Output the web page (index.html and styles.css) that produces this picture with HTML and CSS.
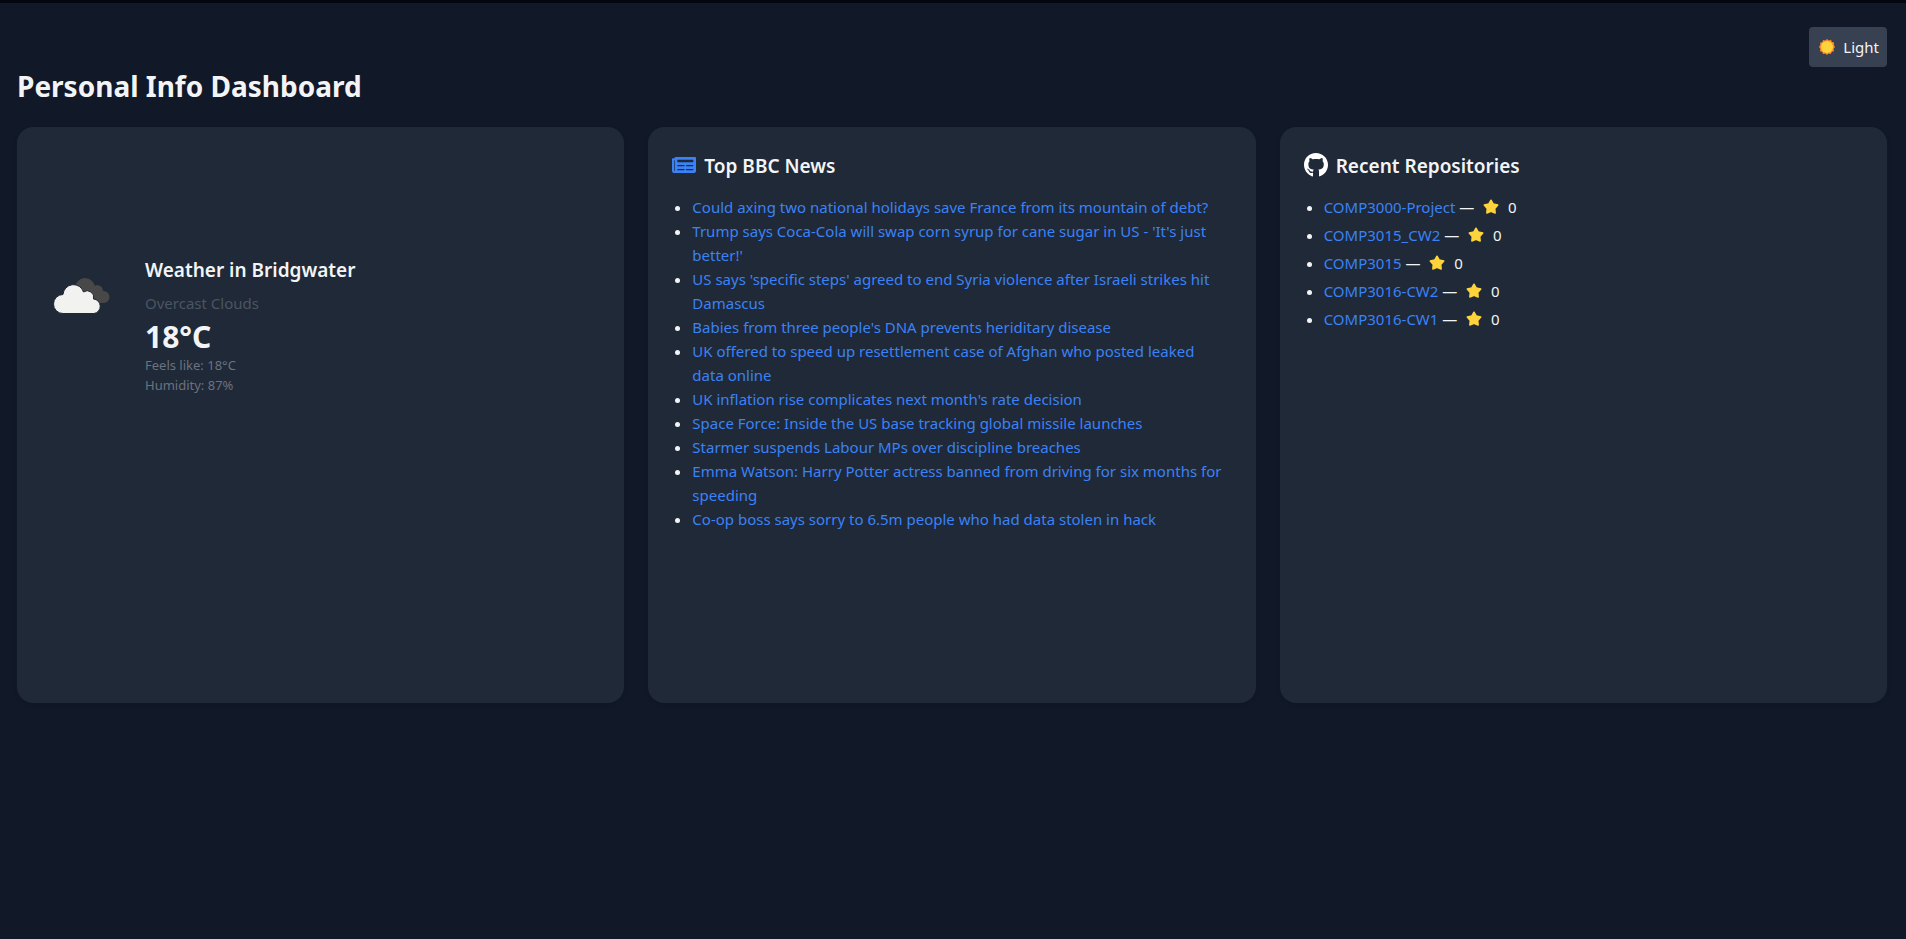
FILE: index.html
```html
<!DOCTYPE html>
<html lang="en">
<head>
<meta charset="utf-8">
<title>Personal Info Dashboard</title>
<link rel="stylesheet" href="styles.css">
</head>
<body>
<svg class="sprite" aria-hidden="true">
  <symbol id="star" viewBox="0 0 32 32">
    <path fill="#ffd43b" stroke="#ffd43b" stroke-width="3" stroke-linejoin="round" d="M16 2.500L20.600 10.200L29.500 12.200L23.500 19L24.300 28L16 24.500L7.700 28L8.500 19L2.500 12.200L11.400 10.200Z"/>
  </symbol>
</svg>
<main class="page">
  <div class="toolbar">
    <button class="theme-button" type="button">
      <svg class="sun" viewBox="0 0 32 32" aria-hidden="true">
        <path fill="#ff8a2b" d="M16 0l3.600 3 4.400-1.400 1.800 4.300 4.500 1.200-.7 4.600L32 16l-2.900 3.700 1 4.600-4.500 1.400-1.900 4.300-4.400-1.200L16 32l-3.500-3.100L8.100 30l-1.900-4.300-4.400-1.400.9-4.600L0 16l2.700-3.800L2 7.600l4.500-1.300 1.700-4.500L12.600 3z"/>
        <circle cx="16" cy="16" r="12" fill="#ffd43b"/>
      </svg>
      <span>Light</span>
    </button>
  </div>
  <h1 class="page-title">Personal Info Dashboard</h1>
  <div class="cards">
    <section class="card">
      <div class="weather">
        <svg class="weather-icon" viewBox="0 0 80 80" role="img" aria-label="Overcast clouds">
          <g fill="#484848">
            <circle cx="44" cy="32" r="10"/>
            <circle cx="56" cy="35" r="6"/>
            <circle cx="62.500" cy="41" r="6"/>
            <path d="M40 32h16l6 15H44z"/>
          </g>
          <g fill="#f2f2f0">
            <path stroke="#1f2937" stroke-width="1" d="M22 57.500a9.500 9.500 0 0 1 0-19a10.500 10.500 0 0 1 20.500-2.500a6.500 6.500 0 0 1 10 7a7.300 7.300 0 0 1 .5 14.500z"/>
          </g>
        </svg>
        <div>
          <h2 class="weather-title">Weather in Bridgwater</h2>
          <p class="weather-desc">Overcast Clouds</p>
          <p class="weather-temp">18°C</p>
          <p class="weather-detail">Feels like: 18°C</p>
          <p class="weather-detail">Humidity: 87%</p>
        </div>
      </div>
    </section>
    <section class="card">
      <h2 class="card-title">
        <svg class="card-icon news-icon" viewBox="0 0 576 512" aria-hidden="true"><path fill="currentColor" d="M552 64H88c-13.255 0-24 10.745-24 24v8H24c-13.255 0-24 10.745-24 24v272c0 30.928 25.072 56 56 56h472c26.510 0 48-21.490 48-48V88c0-13.255-10.745-24-24-24zM56 400a8 8 0 0 1-8-8V144h16v248a8 8 0 0 1-8 8zm236-16H140c-6.627 0-12-5.373-12-12v-8c0-6.627 5.373-12 12-12h152c6.627 0 12 5.373 12 12v8c0 6.627-5.373 12-12 12zm208 0H348c-6.627 0-12-5.373-12-12v-8c0-6.627 5.373-12 12-12h152c6.627 0 12 5.373 12 12v8c0 6.627-5.373 12-12 12zm-208-96H140c-6.627 0-12-5.373-12-12v-8c0-6.627 5.373-12 12-12h152c6.627 0 12 5.373 12 12v8c0 6.627-5.373 12-12 12zm208 0H348c-6.627 0-12-5.373-12-12v-8c0-6.627 5.373-12 12-12h152c6.627 0 12 5.373 12 12v8c0 6.627-5.373 12-12 12zm0-96H140c-6.627 0-12-5.373-12-12v-40c0-6.627 5.373-12 12-12h360c6.627 0 12 5.373 12 12v40c0 6.627-5.373 12-12 12z"/></svg>
        Top BBC News
      </h2>
      <ul class="list">
        <li><a href="#">Could axing two national holidays save France from its mountain of debt?</a></li>
        <li><a href="#">Trump says Coca-Cola will swap corn syrup for cane sugar in US - 'It's just better!'</a></li>
        <li><a href="#">US says 'specific steps' agreed to end Syria violence after Israeli strikes hit Damascus</a></li>
        <li><a href="#">Babies from three people's DNA prevents heriditary disease</a></li>
        <li><a href="#">UK offered to speed up resettlement case of Afghan who posted leaked data online</a></li>
        <li><a href="#">UK inflation rise complicates next month's rate decision</a></li>
        <li><a href="#">Space Force: Inside the US base tracking global missile launches</a></li>
        <li><a href="#">Starmer suspends Labour MPs over discipline breaches</a></li>
        <li><a href="#">Emma Watson: Harry Potter actress banned from driving for six months for speeding</a></li>
        <li><a href="#">Co-op boss says sorry to 6.5m people who had data stolen in hack</a></li>
      </ul>
    </section>
    <section class="card">
      <h2 class="card-title">
        <svg class="card-icon github-icon" viewBox="0 0 496 512" aria-hidden="true"><path fill="currentColor" d="M165.900 397.400c0 2-2.300 3.600-5.200 3.600-3.300.3-5.600-1.300-5.600-3.600 0-2 2.300-3.600 5.200-3.600 3-.3 5.600 1.300 5.600 3.600zm-31.100-4.500c-.7 2 1.300 4.300 4.300 4.900 2.600 1 5.600 0 6.200-2s-1.300-4.300-4.300-5.200c-2.600-.7-5.500.3-6.200 2.300zm44.200-1.700c-2.900.7-4.900 2.600-4.600 4.900.3 2 2.900 3.300 5.900 2.600 2.900-.7 4.900-2.600 4.600-4.600-.3-1.900-3-3.200-5.900-2.900zM244.800 8C106.100 8 0 113.300 0 252c0 110.900 69.800 205.800 169.500 239.200 12.800 2.300 17.300-5.600 17.300-12.100 0-6.200-.3-40.400-.3-61.400 0 0-70 15-84.700-29.800 0 0-11.400-29.100-27.800-36.600 0 0-22.900-15.700 1.600-15.400 0 0 24.900 2 38.600 25.800 21.900 38.600 58.600 27.500 72.900 20.900 2.300-16 8.800-27.100 16-33.700-55.900-6.200-112.300-14.300-112.300-110.500 0-27.500 7.600-41.300 23.600-58.900-2.600-6.500-11.100-33.300 2.600-67.900 20.900-6.500 69 27 69 27 20-5.600 41.500-8.500 62.800-8.500s42.800 2.900 62.800 8.500c0 0 48.100-33.600 69-27 13.700 34.700 5.200 61.400 2.600 67.900 16 17.700 25.800 31.500 25.800 58.900 0 96.500-58.900 104.200-114.800 110.500 9.200 7.900 17 22.900 17 46.400 0 33.700-.3 75.400-.3 83.600 0 6.500 4.600 14.400 17.300 12.100C428.200 457.800 496 362.900 496 252 496 113.300 383.500 8 244.800 8zM97.200 352.900c-1.300 1-1 3.300.7 5.200 1.600 1.600 3.900 2.300 5.200 1 1.300-1 1-3.300-.7-5.200-1.600-1.600-3.900-2.300-5.200-1zm-10.800-8.100c-.7 1.300.3 2.900 2.300 3.900 1.600 1 3.600.7 4.300-.7.7-1.300-.3-2.900-2.300-3.900-2-.6-3.600-.3-4.300.7zm32.400 35.600c-1.600 1.300-1 4.300 1.300 6.200 2.300 2.300 5.200 2.600 6.500 1 1.300-1.300.7-4.300-1.300-6.200-2.200-2.300-5.200-2.600-6.500-1zm-11.400-14.700c-1.600 1-1.600 3.600 0 5.900 1.600 2.300 4.300 3.300 5.600 2.300 1.600-1.300 1.600-3.900 0-6.200-1.400-2.300-4-3.300-5.600-2z"/></svg>
        Recent Repositories
      </h2>
      <ul class="list repos">
        <li><a href="#">COMP3000-Project</a> — <svg class="star" role="img" aria-label="Stars"><use href="#star"/></svg> 0</li>
        <li><a href="#">COMP3015_CW2</a> — <svg class="star" role="img" aria-label="Stars"><use href="#star"/></svg> 0</li>
        <li><a href="#">COMP3015</a> — <svg class="star" role="img" aria-label="Stars"><use href="#star"/></svg> 0</li>
        <li><a href="#">COMP3016-CW2</a> — <svg class="star" role="img" aria-label="Stars"><use href="#star"/></svg> 0</li>
        <li><a href="#">COMP3016-CW1</a> — <svg class="star" role="img" aria-label="Stars"><use href="#star"/></svg> 0</li>
      </ul>
    </section>
  </div>
</main>
</body>
</html>
```
FILE: styles.css
```css
* {
  box-sizing: border-box;
  margin: 0;
  padding: 0;
}

body {
  min-height: 100vh;
  border-top: 3px solid #030712;
  background: #111827;
  color: #f3f4f6;
  font-family: "Segoe UI", "Noto Sans", "Open Sans", sans-serif;
  font-size: 15px;
  line-height: 24px;
}

.sprite {
  display: none;
}

.page {
  padding: 24px 19px 24px 17px;
}

.toolbar {
  display: flex;
  justify-content: flex-end;
}

.theme-button {
  display: flex;
  align-items: center;
  gap: 8px;
  padding: 8px 8px 8px 10px;
  border: 0;
  border-radius: 4px;
  background: #374151;
  color: inherit;
  font: inherit;
  cursor: pointer;
}

.sun {
  width: 16px;
  height: 16px;
}

.page-title {
  margin-bottom: 22px;
  font-size: 28px;
  font-weight: 700;
  line-height: 38px;
}

.cards {
  display: grid;
  grid-template-columns: repeat(3, minmax(0, 1fr));
  gap: 24px;
}

.card {
  min-height: 576px;
  padding: 24px;
  border-radius: 16px;
  background: #1f2937;
  box-shadow: 0 2px 4px rgba(0, 0, 0, 0.1);
}

.card-title {
  display: flex;
  align-items: flex-start;
  gap: 8px;
  margin-bottom: 14px;
  font-size: 19px;
  font-weight: 600;
  line-height: 30px;
}

.card-icon {
  width: 24px;
  height: 28px;
}

.news-icon {
  color: #3b82f6;
}

.github-icon {
  color: #ffffff;
}

.list {
  padding: 0 4px 0 20px;
  list-style: disc;
}

.list a {
  color: #3b82f6;
  text-decoration: none;
}

.list a:hover {
  text-decoration: underline;
}

.repos li + li {
  margin-top: 4px;
}

.star {
  width: 16px;
  height: 16px;
  margin: 0 5px;
  vertical-align: -2px;
}

.weather {
  display: flex;
  align-items: flex-start;
  gap: 24px;
  padding-top: 105px;
}

.weather-icon {
  width: 80px;
  height: 80px;
}

.weather-title {
  margin-bottom: 7px;
  font-size: 19px;
  font-weight: 600;
  line-height: 28px;
}

.weather-desc {
  margin-bottom: 4px;
  color: #4b5563;
}

.weather-temp {
  font-size: 30px;
  font-weight: 700;
  line-height: 36px;
}

.weather-detail {
  color: #6b7280;
  font-size: 13px;
  line-height: 20px;
}
```
